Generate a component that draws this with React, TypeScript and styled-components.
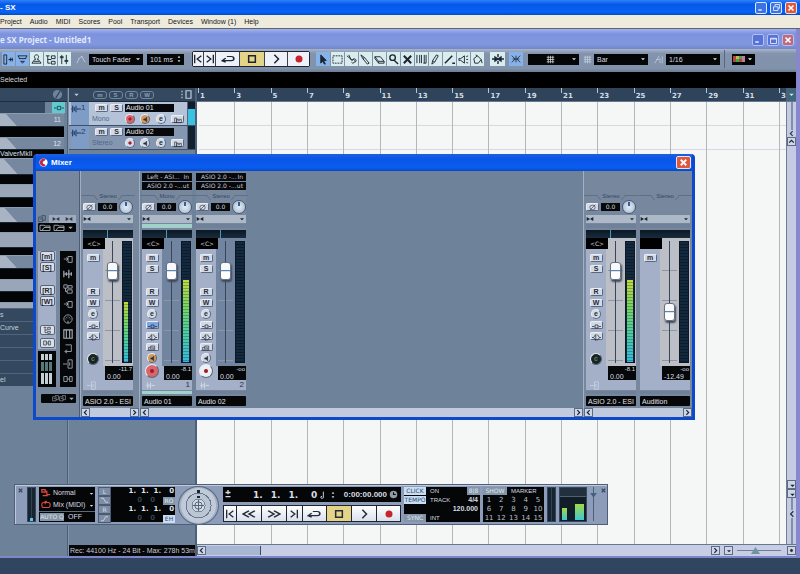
import React from "react";
import styled, { createGlobalStyle, css } from "styled-components";

const Global = createGlobalStyle`
  *, *::before, *::after { box-sizing: border-box; }
  body { margin: 0; font-family: "Liberation Sans", Arial, sans-serif; font-size: 7px; line-height: 8px; color: #111; background: #2f4560; overflow: hidden; }
  button, select, input { font: inherit; color: inherit; margin: 0; padding: 0; border: 0; border-radius: 0; }
  svg { display: block; flex: none; }
`;

/* ---------- glyphs ---------- */

const paths: Record<string, React.ReactNode> = {
  min: <path d="M2 9h5" strokeWidth="2" />,
  restore: <path d="M4 4V2h6v5H8M2 5h6v5H2z" />,
  max: <path d="M2 3h8v7H2zM2 4h8" />,
  x: <path d="M3 3l6 6M9 3l-6 6" strokeWidth="2" />,
  down: <path d="M3 5h6L6 8z" fill="currentColor" stroke="none" />,
  updown: <path d="M4 4h4L6 1zM4 8h4L6 11z" fill="currentColor" stroke="none" />,
  left: <path d="M8 2L4 6l4 4" strokeWidth="2" />,
  right: <path d="M4 2l4 4-4 4" strokeWidth="2" />,
  up: <path d="M2 8l4-4 4 4" strokeWidth="2" />,
  inspector: <path d="M1 1v10h3V1zM6 6h5M8 4v4M10 4v4" />,
  overview: <path d="M1 2h10M2 5h8M4 8h4l-2 2zM1 2l2 3M11 2L9 5" />,
  person: <path d="M6 1a2 2 0 0 1 2 3L7 6h1l3 4H1l3-4h1L4 4a2 2 0 0 1 2-3zM3 8h6" />,
  tree: <path d="M1 2h4M3 2v8h3M7 2h4v3H7zM7 8h4v3H7zM3 6h4" />,
  levels: <path d="M3 1v10M8 1v10M1 4h4M6 8h4M1 3h4M6 7h4" />,
  trackctl: <path d="M2 1v2M2 5v2M2 9v2M6 1h5v10H6z" strokeWidth="1.2" />,
  auto: <path d="M1 11l3-6 3-2 4 7M3 5l1 1M6 3l2 0" />,
  start: <path d="M2 1v10M10 2L5 6l5 4" strokeWidth="1.6" />,
  end: <path d="M10 1v10M2 2l5 4-5 4" strokeWidth="1.6" />,
  rew: <path d="M6 2L1 6l5 4M11 2L6 6l5 4" strokeWidth="1.6" />,
  fwd: <path d="M1 2l5 4-5 4M6 2l5 4-5 4" strokeWidth="1.6" />,
  loop: <path d="M5 3h4q2 0 2 2.5T9 8H1l3-3M1 8l3 2" strokeWidth="1.4" />,
  stop: <path d="M2 2h8v8H2z" strokeWidth="1.8" />,
  play: <path d="M4 1l5 5-5 5" strokeWidth="1.8" />,
  rec: <circle cx="6" cy="6" r="4.2" fill="#c8232b" stroke="none" />,
  arrow: <path d="M3 1l6 6H6l2 4-1 0-2-3-2 2z" fill="currentColor" />,
  range: <path d="M1 2h10v8H1z" strokeDasharray="2 1" />,
  scissors: <path d="M1 2l6 5M3 1l3 6M7 6a2 2 0 1 1-1 3M7 7a2 2 0 1 1 3 2" />,
  glue: <path d="M1 1l4 3 5 6-2 1-5-6zM5 4L3 5" />,
  eraser: <path d="M1 3h6l4 5H5zM1 3v2l4 5V8M5 10h6V8" />,
  zoom: <path d="M5 1a3 3 0 1 1 0 6 3 3 0 0 1 0-6zM7 7l4 4" strokeWidth="1.5" />,
  mute: <path d="M2 2l8 8M10 2l-8 8" strokeWidth="2.2" />,
  warp: <path d="M1 1v9M4 1v9M6 1v9M9 1v9M11 1v9M8 10h3" />,
  pencil: <path d="M2 11l1-4 4-6 2 1-4 7zM3 7l2 2" />,
  line: <path d="M1 10L9 2M9 10l3 0" strokeWidth="1.6" />,
  scrub: <path d="M1 5h2l4-3v8L3 7H1zM9 3l2-1M9 6h2M9 9l2 1" />,
  color: <path d="M2 5l4-3 4 4-3 4H3zM6 2L4 1M10 6l1 4" />,
  snapcross: <path d="M0 6h4M8 6h4M6 1v3M6 8v3M3 4l3 2-3 2zM9 4L6 6l3 2z" fill="currentColor" strokeWidth="1.4" />,
  snap: <path d="M6 2v8M1 2l4 4-4 4M11 2L7 6l4 4M2 6h8" />,
  grid: <path d="M1 3h10M1 6h10M1 9h10M3 1v10M6 1v10M9 1v10" />,
  quant: <path d="M1 11L7 1M3 6h4M8 11V4M11 11V2" />,
  bypass: <path d="M0 6h3M9 6h3M4 4h4v4H4z" />,
  inserts: <path d="M0 6h2M10 6h2M5 2L2 6l3 4zM7 2l3 4-3 4" />,
  sends: <path d="M1 9V5h3V3h6v6zM4 5v3M6 4v4M8 5v3" />,
  monitor: <path d="M3 5h2l3-3v8L5 7H3z" fill="currentColor" />,
  dot: <path d="M6 4a2 2 0 1 1 0 4 2 2 0 0 1 0-4z" fill="currentColor" />,
  lanes: <path d="M1 3h3v7H1zM4 5h7v5H4zM6 7h3" />,
  wave: <path d="M0 6h1M2 2v8M4 4v4M6 2v8M8 5v2M8 6h4" strokeWidth="1.4" />,
  phase: <path d="M6 2a4 3.5 0 1 1 0 8 4 3.5 0 0 1 0-8zM1 11L11 1" />,
  edit: <><circle cx="6" cy="6" r="5" fill="#6f849c" stroke="none" /><path d="M9 2L4 10" stroke="#34485f" strokeWidth="1.4" /></>,
  link: <path d="M1 3h4v6H1zM5 6h3M8 3h3v6H8z" />,
  ext: <path d="M0 6h5M6 1h5v10H6zM8 4v4" />,
  audio: <path d="M1 2v8M4 4v4M7 1v10M10 4v4M1 6h9" strokeWidth="1.4" />,
  group: <path d="M1 1h4v4H1zM6 2h5v3H6zM5 7h6v4H5zM3 5v4h2" />,
  route: <path d="M1 6h5M6 3h5v7H6zM4 4l2 2-2 2" />,
  midi: <path d="M6 1a5 5 0 1 1 0 10A5 5 0 0 1 6 1zM3 6h1M8 6h1M6 3v1M4 4l1 1M7 5l1-1M6 8v3" />,
  keys: <path d="M1 1h10v10H1zM4 1v10M8 1v10M4 1v6M8 1v6" strokeWidth="1.3" />,
  return: <path d="M3 1h7v8H3M5 7L2 9l3 2" />,
  folder: <path d="M1 3h4l1 1h5v6H1zM3 10l2-4h6" />,
  copy: <path d="M1 3h6v7H1zM5 1h6v7H7M3 6h3" />,
  cursor: <path d="M6 0v12M0 6h12M6 2a4 4 0 1 1 0 8 4 4 0 0 1 0-8z" />,
  plusminus: <path d="M6 0v5M3 3h6M3 8h6" strokeWidth="1.6" />,
  note: <path d="M8 1v8M8 9a2 1.5 0 1 1-2-1" strokeWidth="1.4" />,
  clock: <><circle cx="6" cy="6" r="5" fill="#8f9aa6" stroke="none" /><path d="M6 3v3h3" stroke="#040608" strokeWidth="1.4" /></>,
  recmode: <path d="M1 2h4v3H1zM5 4h2v4M7 8h4M2 9h6" strokeWidth="1.5" />,
  cyclemode: <path d="M3 3h6q2 0 2 3t-2 3H3q-2 0-2-3t2-3M5 1v4M7 1l-2 2" strokeWidth="1.3" />,
  punchin: <path d="M0 2h4l4 7h4" strokeWidth="1.4" />,
  punchout: <path d="M0 10h4l4-7h4" strokeWidth="1.4" />,
  marks: <path d="M1 3l5 3-5 3zM11 3L6 6l5 3z" fill="currentColor" stroke="none" />,
  disc: <><circle cx="6" cy="6" r="5.5" fill="#fff" stroke="none" /><path d="M9 2a5 5 0 1 0 0 8L7 8a2 2 0 1 1 0-4z" fill="#c22b4b" stroke="none" /></>,
};

const Glyph = ({ n, s = 10, w }: { n: string; s?: number; w?: number }) => (
  <svg width={w ?? s} height={s} viewBox="0 0 12 12" fill="none" stroke="currentColor" strokeWidth="1" preserveAspectRatio={w ? "none" : undefined} aria-hidden="true">
    {paths[n]}
  </svg>
);

/* ---------- shared parts ---------- */

const WinButton = styled.button<{ $close?: boolean; $soft?: boolean }>`
  width: 12px; height: 12px; display: grid; place-items: center; color: #fff;
  border: 1px solid ${p => (p.$soft ? "#b3bff0" : "#dbe6ff")}; border-radius: 2px;
  background: ${p => (p.$close ? (p.$soft ? "#c1697c" : "#e2573a") : p.$soft ? "#5673d8" : "#3a72e8")};
`;
const WinButtons = styled.div`display: flex; gap: 3px; margin-left: auto;`;

const DarkSelect = styled.label<{ $w: number }>`
  display: flex; align-items: center; width: ${p => p.$w}px; height: 11px; background: #050608; color: #d9dde2; padding: 0 1px 0 3px;
  select { appearance: none; background: transparent; flex: 1; min-width: 0; height: 11px; outline: 0; line-height: 11px; }
`;
const Drop = ({ w, label, value, icon, arrow = "down" }: { w: number; label: string; value: string; icon?: string; arrow?: string }) => (
  <DarkSelect $w={w}>
    {icon && <Spaced><Glyph n={icon} s={9} /></Spaced>}
    <select aria-label={label}><option>{value}</option></select>
    <Glyph n={arrow} s={8} />
  </DarkSelect>
);
const Spaced = styled.span`margin-left: 15px;`;

/* ---------- application frame ---------- */

const Page = styled.div`position: relative; min-height: 100vh; display: flex; flex-direction: column; background: #2f4560;`;
const AppTitle = styled.header`
  height: 15px; display: flex; align-items: center; padding-right: 3px; color: #fff; font-size: 8px; font-weight: bold;
  background: linear-gradient(#2f80f8, #0658e8 30%, #0763f6 80%, #0449c8);
`;
const MenuBar = styled.nav`
  height: 14px; display: flex; align-items: center; gap: 8px; background: #efebdc; border-bottom: 1px solid #5d6570;
  button { background: transparent; color: #15171a; white-space: nowrap; }
`;
const Project = styled.main`flex: 1; display: flex; flex-direction: column; border-right: 4px solid #8687cf; border-bottom: 2px solid #7f85c6; margin-bottom: 16px; min-height: 0;`;
const ProjectTitle = styled.div`
  height: 20px; display: flex; align-items: center; padding: 2px 2px 0 0; color: #e3e9fb; font: bold 8px/10px "Open Sans", "Noto Sans", sans-serif;
  background: linear-gradient(#a3b2ee, #7c92de 25%, #8197df 75%, #7386cb);
`;
const Toolbar = styled.div`
  height: 23px; display: flex; align-items: center; padding: 0 2px 3px; background: linear-gradient(#a9b5c8, #8393ad 20%, #8192ab 85%, #6b7c94);
  color: #1c2431;
`;
const Group = styled.div<{ $ml?: number; $dark?: boolean }>`
  display: flex; gap: 1px; margin-left: ${p => p.$ml ?? 0}px; flex: none;
  ${p => p.$dark && css`border: 1px solid #20242e; background: #3a4252; border-radius: 2px;`}
`;
const ToolButton = styled.button<{ $w?: number; $on?: boolean; $white?: boolean; $yellow?: boolean }>`
  width: ${p => p.$w ?? 13}px; height: 14px; display: grid; place-items: center;
  background: ${p => (p.$on ? "#86b2ea" : p.$yellow ? "#e3d487" : p.$white ? "#eef1f7" : "#d9ecee")};
`;
const Gap = styled.span<{ $w: number }>`width: ${p => p.$w}px; flex: none;`;
const Pale = styled.span`color: #c3cfdd;`;
const Divider = styled.span`width: 1px; height: 18px; background: #566780; flex: none;`;
const Swatches = styled.span`
  display: grid; grid-template-columns: repeat(4, 3px); grid-auto-rows: 3px;
  i { background: #b3493a; } i:nth-child(2n) { background: #c9b94a; } i:nth-child(3n) { background: #45a35a; } i:nth-child(4n) { background: #c07f9a; }
`;
const InfoLine = styled.div`height: 16px; background: #000; color: #d5d8dc; line-height: 15px;`;
const Body = styled.div`flex: 1; display: grid; grid-template-columns: 68px 129px minmax(0, 1fr); background: #6d8299; min-height: 0;`;

/* ---------- inspector ---------- */

const Inspector = styled.aside`border-right: 1px solid #4c6079; display: flex; flex-direction: column;`;
const InsHead = styled.div`
  height: 14px; background: #34485f; border-bottom: 1px solid #1e2c3c; display: flex; justify-content: flex-end; align-items: center; padding-right: 4px; color: #8fa3b9;
`;
const InsSlot = styled.div`height: 11px; display: flex; justify-content: space-between; padding-right: 2px; color: #0d4047;
  span { width: 45px; background: #34485f; }
  button { width: 13px; height: 11px; background: #62c9cf; display: grid; place-items: center; }
`;
const Band = styled.div<{ $h: number; $k: string }>`
  height: ${p => p.$h}px; margin-right: 3px; display: flex; align-items: center; padding-right: 3px; overflow: hidden;
  background: ${p => ({ black: "#020406", light: "#99a6b8", plain: "#76889f", curve: "linear-gradient(48deg, #a8b4c4 0 22%, #76889f 23%)" }[p.$k])};
  border-top: 1px solid ${p => (p.$k === "black" ? "#1a2634" : "#8b9bb0")};
  color: #dde2e8; justify-content: ${p => (p.$k === "curve" ? "flex-end" : "flex-start")};
`;
const InsTab = styled.button`
  height: 13px; margin-right: 3px; background: #34485f; color: #c6d0db; border-top: 1px solid #50647c; text-align: left;
`;

/* ---------- track list ---------- */

const TrackList = styled.section`display: flex; flex-direction: column; border-left: 1px solid #8295ac; border-right: 2px solid #4c6079; min-height: 0;`;
const ListHead = styled.div`
  height: 14px; flex: none; display: flex; align-items: center; gap: 2px; background: #34485f; border-bottom: 1px solid #1e2c3c; padding: 0 3px; color: #c0ccda;
`;
const Pill = styled.button`width: 14px; height: 8px; border: 1px solid #71879f; border-radius: 3px; background: #34485f; color: #8ba0b6; font-size: 6px; line-height: 6px; font-weight: bold;`;
const Track = styled.div<{ $sel?: boolean }>`
  height: 24px; flex: none; display: grid; grid-template-columns: 18px minmax(0, 1fr) 8px; border-bottom: 1px solid #3e5168; padding-left: 2px;
  background: ${p => (p.$sel ? "#b5c3d9" : "#8496b0")};
`;
const TrackTag = styled.div`background: #7f9cc6; color: #20406a; display: flex; align-items: flex-start; padding-top: 2px; font-size: 8px;`;
const TrackMain = styled.div`display: flex; flex-direction: column; padding: 1px 1px 0 3px; gap: 1px;`;
const Line = styled.div`display: flex; align-items: center; gap: 2px; height: 10px;`;
const MiniButton = styled.button<{ $round?: boolean; $bg?: string; $size?: number }>`
  width: ${p => p.$size ?? (p.$round ? 10 : 13)}px; height: ${p => p.$size ?? (p.$round ? 10 : 8)}px; flex: none;
  display: grid; place-items: center; border: 1px solid #e9edf4; border-right-color: #596880; border-bottom-color: #596880;
  border-radius: ${p => (p.$round ? "50%" : "2px")}; background: ${p => p.$bg ?? "#d3dae6"}; color: #262c3a; font-size: 7px; line-height: 6px; font-weight: bold;
`;
const TrackName = styled.input`width: 49px; height: 8px; background: #06080b; color: #e3e6ea; padding-left: 1px;`;
const TrackKind = styled.span`width: 31px; color: #4f688c;`;
const TrackMeter = styled.div<{ $on?: boolean }>`background: ${p => (p.$on ? "linear-gradient(#0d1c2c 30%, #39c3e3 30%)" : "#12202f")}; border-left: 1px solid #53677f;`;
const Status = styled.div`margin-top: auto; height: 11px; background: #05070a; color: #c7ccd2; line-height: 11px; white-space: nowrap; overflow: hidden; padding-left: 1px;`;

/* ---------- arrange ---------- */

const Arrange = styled.section`display: grid; grid-template-rows: 14px minmax(0, 1fr) 12px; min-width: 0;`;
const bars = css`display: grid; grid-template-columns: repeat(16, minmax(0, 36fr)) minmax(0, 7fr); flex: 1; min-width: 0;`;
const RulerRow = styled.div`display: flex; background: #2f445b; border-bottom: 1px solid #66788c; padding-left: 1px; color: #d4dde6;`;
const Ruler = styled.div`
  ${bars}
  span { border-left: 1px solid #b8c5d1; height: 5px; padding: 4px 0 0 1px; font: bold 7px/9px "DejaVu Sans", sans-serif; white-space: nowrap; }
`;
const Canvas = styled.div`display: flex; background: #f5f7f7; padding-left: 1px;`;
const Bars = styled.div`
  ${bars}
  background: linear-gradient(transparent 23px, #d5d9dc 23px 24px, transparent 24px 47px, #d9d5ea 47px 48px, transparent 48px);
  span { border-left: 1px solid #b2b7ba; } span:first-child { border-color: #f5f7f7; }
`;
const VScroll = styled.div`width: 10px; background: #c5cbe2; border-left: 1px solid #6f7f93; display: flex; flex-direction: column; align-items: center; color: #27364a;`;
const ScrollBtn = styled.button`width: 9px; height: 9px; flex: none; display: grid; place-items: center; background: #cdd5e6; border: 1px solid #5c6c84; color: #18222f;`;
const VTrack = styled.span<{ $h?: number }>`width: 2px; background: #8190a6; ${p => (p.$h ? `height:${p.$h}px;` : "flex: 1;")} ${p => !p.$h && "background: transparent;"}`;
const HScroll = styled.div`display: flex; align-items: center; height: 12px; background: #c6cde4; border-top: 1px solid #68788d;`;
const HThumb = styled.span`width: 55px; height: 9px; background: #a7b6d2; border-right: 1px solid #3c4c62;`;
const ZoomLine = styled.input`
  appearance: none; width: 44px; height: 9px; background: linear-gradient(transparent 4px, #6e7f96 4px 5px, transparent 5px);
  &::-webkit-slider-thumb { appearance: none; width: 9px; height: 7px; background: #6f96a0; clip-path: polygon(50% 0, 100% 100%, 0 100%); }
`;

/* ---------- mixer ---------- */

const Mixer = styled.section`
  position: absolute; left: 33px; right: 105px; top: 154px; border: 3px solid #0d49cc; border-top: 0; border-radius: 4px 4px 0 0; background: #6e839a;
`;
const MixTitle = styled.div`
  height: 17px; display: flex; align-items: center; gap: 3px; padding: 0 1px 0 3px; color: #fff; font-size: 8px; font-weight: bold; border-radius: 3px 3px 0 0;
  background: linear-gradient(#1d5fe0, #0a55e6 30%, #0a5df2 80%, #0848c4);
`;
const MixBody = styled.div`display: flex; align-items: stretch;`;
const Pane = styled.div<{ $w?: number; $grow?: boolean }>`
  ${p => (p.$grow ? "flex: 1; min-width: 0;" : `width: ${p.$w}px; flex: none;`)}
  display: flex; flex-direction: column; border-left: 1px solid #a1afc0; background: ${p => (p.$grow ? "#6e839a" : "#77879e")};
`;
const Strips = styled.div`display: flex; flex: 1; gap: 4px; padding: 1px 2px 0;`;
const PaneScroll = styled.div`display: flex; justify-content: space-between; height: 9px; margin-top: 2px; background: #c2cadd;`;

const Strip = styled.div`width: 50px; flex: none; display: flex; flex-direction: column; background: #77879e;`;
const Routing = styled.div`height: 18px; display: flex; flex-direction: column; gap: 1px; padding-top: 1px;`;
const Route = styled.button`
  height: 8px; background: #06080b; color: #c8cdd3; font: 6px/8px "DejaVu Sans", sans-serif; display: flex; justify-content: space-between; padding: 0 3px 0 5px; white-space: nowrap;
`;
const Kind = styled.div`
  height: 9px; margin-top: 1px; display: flex; align-items: flex-end; font-size: 6px; line-height: 8px; color: #34475f;
  &::before, &::after { content: ""; flex: 1; height: 5px; border-top: 1px solid #5e6f87; }
  &::before { border-right: 1px solid #5e6f87; transform: skewX(40deg); } &::after { border-left: 1px solid #5e6f87; transform: skewX(-40deg); }
  span { padding: 0 3px; }
`;
const GainRow = styled.div`height: 14px; display: flex; align-items: center; gap: 2px; color: #46535f;`;
const Gain = styled.output`width: 19px; height: 8px; background: #06080b; color: #d0d4d9; text-align: center; font: 6px/8px "DejaVu Sans", sans-serif;`;
const Knob = styled.button`
  width: 14px; height: 14px; margin-left: auto; border-radius: 50%; border: 1px solid #485a72; background: linear-gradient(90deg, transparent 5px, #345e9c 5px 7px, transparent 7px) 0 1px / 12px 4px no-repeat, radial-gradient(#e3ecf5, #a1b6ce);
`;
const Bar = styled.button`height: 8px; margin-top: 1px; background: #aeb9c8; display: flex; justify-content: space-between; color: #1a2431;`;
const Tint = styled.div<{ $on?: boolean; $h?: number }>`height: ${p => p.$h ?? 4}px; margin-top: 1px; background: ${p => (p.$on ? "#a1d1c8" : "#6f8199")};`;
const Pan = styled.div<{ $on: boolean }>`
  height: 8px; margin-top: 2px; background: ${p => (p.$on ? "linear-gradient(90deg, transparent 24px, #4f98b3 24px 25px, transparent 25px), " : "")}linear-gradient(#0c1824, #172c3e);
`;
const StripBody = styled.div`height: 142px; display: grid; grid-template-columns: 20px minmax(0, 1fr);`;
const Side = styled.div`background: #a4b0c7; display: flex; flex-direction: column; align-items: center; gap: 1px;`;
const PanText = styled.div`width: 22px; height: 11px; margin-bottom: 3px; flex: none; background: #000; color: #d5d9de; text-align: center; font: 6px/11px "DejaVu Sans", sans-serif; align-self: flex-start; z-index: 1;`;
const Slot = styled.div<{ $h?: number }>`height: ${p => p.$h ?? 10}px; display: grid; place-items: center; flex: none; color: #dbe3ec;`;
const FaderCol = styled.div`display: flex; flex-direction: column; background: #a4b0c7;`;
const FaderArea = styled.div<{ $pale?: boolean }>`
  height: 128px; display: flex; justify-content: space-between; padding: 3px 1px 2px 2px; background: ${p => (p.$pale ? "#bcbfc6" : "#7285a0")};
`;
const Fader = styled.input`
  appearance: none; writing-mode: vertical-lr; direction: rtl; width: 15px; height: 122px;
  background: linear-gradient(90deg, transparent 7px, #39465a 7px 8px, transparent 8px), repeating-linear-gradient(transparent 0 29px, #8d96a6 29px 30px);
  &::-webkit-slider-thumb {
    appearance: none; width: 11px; height: 18px; border: 1px solid #667284; border-radius: 3px; box-shadow: 1px 2px 2px #3d485a;
    background: linear-gradient(#f7f9fb 7px, #5d83ae 7px 8px, #d5e2f0 8px 9px, #fff 9px);
  }
`;
const Meter = styled.div<{ $narrow?: boolean }>`
  width: 10px; height: 122px; display: flex; align-items: flex-end; background: repeating-linear-gradient(#13293d 0 2px, #0d1c2c 2px 3px);
  justify-content: ${p => (p.$narrow ? "flex-start" : "center")}; overflow: hidden; border: 1px solid #0c1826;
`;
const Level = styled.div<{ $narrow?: boolean }>`
  width: ${p => (p.$narrow ? 4 : 6)}px; margin-left: ${p => (p.$narrow ? 1 : 0)}px;
  background: repeating-linear-gradient(transparent 0 2px, #0b24304d 2px 3px), linear-gradient(#c3da3c, #7fd65a 30%, #4ccfa0 65%, #38b9dc);
`;
const ValueBox = styled.div`
  height: 14px; background: #050709; color: #d9dde2; font-size: 7px; line-height: 7px; display: flex; flex-direction: column; padding: 0 1px;
  margin-left: 2px;
  small { font-size: 6px; text-align: right; }
  span { padding-left: 1px; white-space: nowrap; }
`;
const StripNo = styled.div`height: 10px; display: flex; justify-content: space-between; align-items: center; background: #a4b0c7; font-size: 8px; color: #26324a; padding: 0 2px 0 4px;`;
const Wave = styled.span`color: #cbd6e5;`;
const StripName = styled.input`width: 100%; height: 10px; margin-top: 2px; background: #050709; color: #e1e5ea; padding-left: 2px; border-radius: 1px;`;

type StripProps = {
  name: string; kind: string; routes?: string[]; tint?: boolean; io?: boolean; master?: boolean;
  fader: number; peak: string; value: string; level?: number; narrow?: boolean; no?: string; armed?: boolean;
};

const Red = styled.span`color: #a51f2b;`;
const Dim = styled.span`color: #5d7c70;`;

const ChannelStrip = (s: StripProps) => (
  <Strip>
    <Routing>{s.routes?.map((r, i) => <Route key={i}><span>{r}</span><span>{i ? "ut" : "In"}</span></Route>)}</Routing>
    <Kind><span>{s.kind}</span></Kind>
    <GainRow>
      {!s.master && <>
        <MiniButton aria-label="Phase"><Glyph n="phase" s={7} /></MiniButton>
        <Gain>0.0</Gain>
        <Knob aria-label="Input gain" />
      </>}
    </GainRow>
    <Bar aria-label="View"><Glyph n="marks" s={8} /><Glyph n="down" s={8} /></Bar>
    <Tint $on={s.tint} />
    <Pan $on={!s.master} />
    <StripBody>
      <Side>
        <PanText>{s.master ? "" : "<C>"}</PanText>
        <Slot><MiniButton aria-label="Mute">m</MiniButton></Slot>
        {!s.master && <>
          <Slot>{s.narrow ? null : <MiniButton aria-label="Solo">S</MiniButton>}</Slot>
          <Slot $h={11} />
          <Slot><MiniButton aria-label="Read">R</MiniButton></Slot>
          <Slot><MiniButton aria-label="Write">W</MiniButton></Slot>
          <Slot><MiniButton $round aria-label="Edit">e</MiniButton></Slot>
          <Slot><MiniButton $bg={s.tint ? "#7aa5e6" : undefined} aria-label="EQ bypass"><Glyph n="bypass" s={9} /></MiniButton></Slot>
          <Slot><MiniButton aria-label="Insert bypass"><Glyph n="inserts" s={9} /></MiniButton></Slot>
          {!s.io && <>
            <Slot><MiniButton aria-label="Send bypass"><Glyph n="sends" s={8} /></MiniButton></Slot>
            <Slot><MiniButton $round $bg={s.armed ? "#d39a5c" : undefined} aria-label="Monitor"><Glyph n="monitor" s={7} /></MiniButton></Slot>
            <Slot $h={13}><MiniButton $round $size={14} $bg={s.armed ? "#d9666b" : "#eceff4"} aria-label="Record enable"><Red><Glyph n="dot" s={10} /></Red></MiniButton></Slot>
          </>}
          {s.io && <>
            <Slot $h={9} />
            <Slot $h={13}><MiniButton $round $size={12} $bg="#182420" aria-label="Clip"><Dim>c</Dim></MiniButton></Slot>
          </>}
        </>}
      </Side>
      <FaderCol>
        <FaderArea $pale={s.io}>
          <Fader type="range" min={0} max={100} defaultValue={s.fader} aria-label={`${s.name} level`} />
          <Meter $narrow={s.narrow}>{s.level ? <Level $narrow={s.narrow} style={{ height: `${s.level}%` }} /> : null}</Meter>
        </FaderArea>
        <ValueBox><small>{s.peak}</small><span>{s.value}</span></ValueBox>
      </FaderCol>
    </StripBody>
    <StripNo><Wave>{!s.master && <Glyph n={s.io ? "ext" : "wave"} s={9} />}</Wave><span>{s.no}</span></StripNo>
    <Tint $on={s.tint} $h={3} />
    <StripName defaultValue={s.name} aria-label="Channel name" />
  </Strip>
);

const Common = styled.div`width: 44px; flex: none; display: flex; flex-direction: column; padding: 34px 3px 0 2px; background: #77879e; border-right: 1px solid #4a5b73; color: #1b2430;`;
const CommonTop = styled.div`height: 18px; display: flex; align-items: flex-end; gap: 3px; color: #2c394c;
  span { flex: 1; height: 8px; background: #9fabbd; display: flex; justify-content: space-around; }
`;
const BlackRow = styled.div<{ $ml?: number }>`height: 9px; margin-left: ${p => p.$ml ?? 0}px; background: #050709; color: #aab2bb; display: flex; align-items: center; justify-content: space-evenly; border-radius: 1px;`;
const CommonGrid = styled.div`height: 136px; margin: 19px 0 7px; display: grid; grid-template-columns: 18px 16px; justify-content: space-between;`;
const CommonBtns = styled.div`display: flex; flex-direction: column; align-items: center; gap: 1px; background: linear-gradient(#a4b0c7 0 98px, #77879e 98px);`;
const CommonBtn = styled.button`width: 15px; height: 10px; flex: none; background: #d9dfe8; border: 1px solid #56657b; border-radius: 2px; display: grid; place-items: center; font-size: 7px; line-height: 7px; font-weight: bold;`;
const NarrowGrid = styled.button`
  width: 18px; flex: 1; margin-top: 2px; border: 3px solid #030506;
  background: repeating-linear-gradient(90deg, transparent 0 3px, #030506 3px 4px), linear-gradient(#c4cfd3 6px, #030506 6px 8px, #58797b 8px 17px, #030506 17px 19px, #c4cfd3 19px);
`;
const TypeColumn = styled.div`background: #050709; color: #a9b1bb; display: flex; flex-direction: column; align-items: center; justify-content: space-between; padding: 3px 0;`;

/* ---------- transport ---------- */

const Transport = styled.section`
  position: absolute; left: 14px; bottom: 49px; height: 41px; display: flex; align-items: stretch; gap: 3px; padding: 2px 0 2px 2px; border: 1px solid #4f5f78;
  background: #8d9cb8; color: #d9dde2; box-shadow: inset 1px 1px #bfc9da;
`;
const Edge = styled.button`width: 7px; background: transparent; color: #39475c; display: flex; flex: none;`;
const DarkCell = styled.div<{ $w: number }>`width: ${p => p.$w}px; flex: none; background: #040608; display: flex; flex-direction: column;`;
const Tiny = styled.div`
  width: 9px; flex: none; border: 1px solid #34475d; background: repeating-linear-gradient(90deg, #16242f 0 3px, #334152 3px 4px); display: flex; align-items: flex-end; justify-content: center;
  i { width: 3px; height: 3px; background: #59c8e8; }
`;
const ModeRow = styled.label`
  height: 12px; display: flex; align-items: center; gap: 2px; padding-left: 2px; color: #e04a3c;
  select { appearance: none; background: transparent; color: #d9dde2; flex: 1; min-width: 0; height: 12px; outline: 0; }
  svg:last-child { color: #d9dde2; }
`;
const Tag = styled.button<{ $dim?: boolean; $w?: number }>`
  width: ${p => p.$w ?? 22}px; height: 8px; background: ${p => (p.$dim ? "#8595a8" : "#c9ddf3")}; color: ${p => (p.$dim ? "#dfe7ef" : "#2d4c72")}; font: 6px/8px "DejaVu Sans", sans-serif; flex: none;
  display: grid; place-items: center;
`;
const Cells = styled.div`display: flex; align-items: center; gap: 4px; height: 9px; white-space: nowrap; font-size: 6px;`;
const Locators = styled.div`width: 77px; display: grid; grid-template-columns: 13px minmax(0, 1fr); grid-auto-rows: 9px; background: #040608; flex: none;`;
const LocBtn = styled.button`background: #7d8da5; border: 1px solid #4c5b72; color: #d6e0ea; height: 9px; font: 6px/7px "DejaVu Sans", sans-serif; display: grid; place-items: center;`;
const LocVal = styled.div<{ $dim?: boolean }>`
  display: flex; justify-content: flex-end; align-items: center; gap: ${p => (p.$dim ? 8 : 5)}px; font: bold 7px/9px "DejaVu Sans", sans-serif; color: ${p => (p.$dim ? "#35404a" : "#dfe3e8")};
  span:last-child { padding: 0 1px 0 3px; }
`;
const Wheel = styled.div`
  width: 41px; height: 39px; flex: none; border-radius: 50%; display: grid; place-items: center; color: #4b5d75; border: 1px solid #5b6a80; margin-top: -1px;
  background: linear-gradient(#1b2430, #1b2430) 18px 3px / 3px 3px no-repeat, linear-gradient(#1b2430, #1b2430) 18px 9px / 3px 2px no-repeat,
    radial-gradient(circle, #d3dae2 0 6px, #78879b 6px 7px, #bcc6d2 7px 12px, #697a90 12px 13px, #c0cad8 13px 17px, #a1afc2 18px);
`;
const Center = styled.div`width: 179px; flex: none; display: flex; flex-direction: column; gap: 3px; padding-left: 1px;`;
const Display = styled.div`
  height: 15px; background: #040608; display: flex; align-items: center; padding: 0 3px 0 0;
  em { font: bold 8px/10px "Liberation Sans", sans-serif; margin-right: 2px; }
`;
const Position = styled.strong`display: flex; gap: 8px; margin: 0 1px 0 20px; font: bold 9px/12px "DejaVu Sans", sans-serif; span:last-child { margin-left: 5px; }`;
const Keys = styled.div`flex: 1; display: grid; grid-template-columns: 12fr 24fr 24fr 15fr 24fr 24fr 24fr 23fr; gap: 1px; background: #20242e; border: 1px solid #20242e; color: #262c3a;`;
const Key = styled.button<{ $on?: boolean }>`display: grid; place-items: center; background: ${p => (p.$on ? "#e3d487" : "linear-gradient(#fff, #d9e1ec)")};`;
const Between = styled.div`display: flex; justify-content: flex-end; align-items: center; height: 9px;`;
const Markers = styled.div`
  display: grid; grid-template-columns: repeat(5, 1fr); grid-auto-rows: 9px; margin-top: 1px;
  button { background: transparent; color: #b9c0c8; font: 7px/9px "DejaVu Sans", sans-serif; }
`;
const OutMeter = styled.div`width: 28px; flex: none; border: 1px solid #34475d; background: linear-gradient(#22303d 8px, #50606f 8px 9px, #111d29 9px); display: flex; align-items: flex-end; justify-content: space-between; padding: 0 2px 1px;`;
const OutLevel = styled.i<{ $w: number }>`width: ${p => p.$w}px; background: linear-gradient(#a5d944, #3ec8d2);`;
const OutFader = styled.input`
  appearance: none; writing-mode: vertical-lr; direction: rtl; width: 7px; height: 34px; flex: none; background: linear-gradient(90deg, transparent 3px, #4d5e77 3px 4px, transparent 4px);
  &::-webkit-slider-thumb { appearance: none; width: 7px; height: 5px; background: #46607f; clip-path: polygon(0 0, 100% 0, 50% 100%); }
`;
const ColorButton = styled.button`width: 23px; height: 11px; background: #050608; color: #fff; display: flex; align-items: center; justify-content: center; gap: 1px;`;
const RulerEnd = styled.button`width: 10px; height: 13px; background: #3f667c; color: #d4e6ee; display: grid; place-items: center;`;
const Fill = styled.span`flex: 1;`;
const Bold = styled.strong`font-size: 7px; padding-right: 2px;`;
const MixClose = styled(WinButton)`width: 15px; height: 13px;`;
const ModeFoot = styled.div`display: flex; align-items: center; gap: 4px; height: 12px; padding-left: 1px; border-top: 1px solid #5c6a7c;`;

const tools = ["range", "scissors", "glue", "eraser", "zoom", "mute", "warp", "pencil", "line", "scrub", "color"];
const menus = ["Project", "Audio", "MIDI", "Scores", "Pool", "Transport", "Devices", "Window (1)", "Help"];
const bands: [number, string, string?][] = [
  [13, "curve", "11"], [11, "black"], [12, "curve", "12"], [9, "black", "ValverMkII"], [16, "curve"], [10, "black"], [13, "light"], [10, "black"],
  [15, "curve"], [10, "black"], [15, "light"], [8, "black"], [13, "curve"], [11, "black"], [12, "light"], [11, "black"], [6, "light"],
];
const keys = ["start", "rew", "fwd", "end", "loop", "stop", "play", "rec"];

export default function App() {
  return (
    <Page>
      <Global />
      <AppTitle>
        <span>- SX</span>
        <WinButtons>
          <WinButton aria-label="Minimize"><Glyph n="min" s={8} /></WinButton>
          <WinButton aria-label="Restore"><Glyph n="restore" s={9} /></WinButton>
          <WinButton $close aria-label="Close"><Glyph n="x" s={10} /></WinButton>
        </WinButtons>
      </AppTitle>
      <MenuBar>{menus.map(m => <button key={m}>{m}</button>)}</MenuBar>
      <Project>
        <ProjectTitle>
          <span>e SX Project - Untitled1</span>
          <WinButtons>
            <WinButton $soft aria-label="Minimize"><Glyph n="min" s={8} /></WinButton>
            <WinButton $soft aria-label="Maximize"><Glyph n="max" s={9} /></WinButton>
            <WinButton $soft $close aria-label="Close"><Glyph n="x" s={10} /></WinButton>
          </WinButtons>
        </ProjectTitle>
        <Toolbar>
          <Group>
            {["inspector", "overview", "person", "tree", "levels"].map((g, i) => <ToolButton key={g} $on={i < 2} aria-label={g}><Glyph n={g} s={11} /></ToolButton>)}
          </Group>
          <Gap $w={5} /><Pale><Glyph n="auto" s={10} /></Pale><Gap $w={3} />
          <Drop w={54} label="Automation mode" value="Touch Fader" />
          <Gap $w={4} />
          <Drop w={37} label="Return time" value="101 ms" arrow="updown" />
          <Group $ml={8} $dark>
            {[["start", 10], ["end", 11], ["loop", 23], ["stop", 24], ["play", 22], ["rec", 21]].map(([g, w]) => (
              <ToolButton key={g} $w={w as number} $white $yellow={g === "stop"} aria-label={g as string}><Glyph n={g as string} s={10} w={g === "loop" ? 14 : undefined} /></ToolButton>
            ))}
          </Group>
          <Gap $w={6} />
          <Group>
            <ToolButton $w={14} $on aria-label="Select"><Glyph n="arrow" s={11} /></ToolButton>
            {tools.map(g => <ToolButton key={g} aria-label={g}><Glyph n={g} s={11} /></ToolButton>)}
          </Group>
          <Gap $w={6} />
          <ToolButton $w={15} aria-label="Autoscroll"><Glyph n="snapcross" s={12} /></ToolButton>
          <Gap $w={4} />
          <ToolButton $w={14} $on aria-label="Snap"><Glyph n="snap" s={10} /></ToolButton>
          <Gap $w={5} />
          <Drop w={51} label="Snap mode" value="" icon="grid" />
          <Gap $w={4} /><Pale><Glyph n="grid" s={9} /></Pale><Gap $w={2} />
          <Drop w={54} label="Grid type" value="Bar" />
          <Gap $w={6} /><Pale><Glyph n="quant" s={9} /></Pale><Gap $w={3} />
          <Drop w={54} label="Quantize" value="1/16" />
          <Gap $w={4} /><Divider /><Gap $w={7} />
          <ColorButton aria-label="Color menu"><Swatches>{Array.from({ length: 8 }, (_, i) => <i key={i} />)}</Swatches><Glyph n="down" s={8} /></ColorButton>
        </Toolbar>
        <InfoLine>Selected</InfoLine>
        <Body>
          <Inspector>
            <InsHead><Glyph n="edit" s={11} /></InsHead>
            <InsSlot><span /><button aria-label="Bypass"><Glyph n="bypass" s={10} /></button></InsSlot>
            {bands.map(([h, k, t], i) => <Band key={i} $h={h} $k={k}>{t}</Band>)}
            <InsTab>s</InsTab><InsTab>Curve</InsTab><InsTab aria-label="Inserts" /><InsTab aria-label="Sends" /><InsTab aria-label="Channel" /><InsTab>el</InsTab>
          </Inspector>
          <TrackList>
            <ListHead>
              <Glyph n="down" s={9} /><Gap $w={8} />
              {["m", "S", "R", "W"].map(t => <Pill key={t}>{t}</Pill>)}
              <Gap $w={22} /><Glyph n="trackctl" s={9} w={12} />
            </ListHead>
            {["1", "2"].map(n => {
              const one = n === "1";
              return (
                <Track key={n} $sel={one}>
                  <TrackTag><Glyph n="wave" s={10} /><span>{n}</span></TrackTag>
                  <TrackMain>
                    <Line>
                      <Gap $w={1} />
                      <MiniButton aria-label="Mute">m</MiniButton><MiniButton aria-label="Solo">S</MiniButton>
                      <TrackName defaultValue={`Audio 0${n}`} aria-label="Track name" />
                    </Line>
                    <Line>
                      <TrackKind>{one ? "Mono" : "Stereo"}</TrackKind>
                      <MiniButton $round $bg={one ? "#d9666b" : undefined} aria-label="Record"><Red><Glyph n="dot" s={8} /></Red></MiniButton>
                      <Gap $w={1} />
                      <MiniButton $round $bg={one ? "#d39a5c" : undefined} aria-label="Monitor"><Glyph n="monitor" s={7} /></MiniButton>
                      <Gap $w={2} />
                      <MiniButton $round aria-label="Edit">e</MiniButton>
                      <Gap $w={1} />
                      <MiniButton aria-label="Lanes"><Glyph n="lanes" s={8} /></MiniButton>
                    </Line>
                  </TrackMain>
                  <TrackMeter $on={one} />
                </Track>
              );
            })}
            <Status>Rec: 44100 Hz - 24 Bit - Max: 278h 53m</Status>
          </TrackList>
          <Arrange>
            <RulerRow>
              <Ruler>{Array.from({ length: 17 }, (_, i) => <span key={i}>{i * 2 + 1}</span>)}</Ruler>
              <RulerEnd aria-label="Ruler format"><Glyph n="down" s={9} /></RulerEnd>
            </RulerRow>
            <Canvas>
              <Bars>{Array.from({ length: 17 }, (_, i) => <span key={i} />)}</Bars>
              <VScroll>
                <VTrack $h={28} /><Glyph n="left" s={7} />
                <ScrollBtn aria-label="Scroll up"><Glyph n="up" s={7} /></ScrollBtn>
                <VTrack />
                <ScrollBtn aria-label="Scroll down"><Glyph n="down" s={9} /></ScrollBtn>
                <ScrollBtn aria-label="Zoom presets"><Glyph n="down" s={9} /></ScrollBtn>
                <VTrack $h={12} /><Glyph n="left" s={8} /><VTrack $h={26} />
              </VScroll>
            </Canvas>
            <HScroll>
              <ScrollBtn aria-label="Scroll left"><Glyph n="left" s={7} /></ScrollBtn>
              <HThumb /><Fill />
              <ScrollBtn aria-label="Scroll right"><Glyph n="right" s={7} /></ScrollBtn>
              <Gap $w={4} />
              <ScrollBtn aria-label="Zoom presets"><Glyph n="down" s={8} /></ScrollBtn>
              <Gap $w={4} />
              <ZoomLine type="range" defaultValue={40} aria-label="Horizontal zoom" />
              <Gap $w={6} />
              <ScrollBtn aria-label="Resize"><Glyph n="dot" s={7} /></ScrollBtn>
            </HScroll>
          </Arrange>
        </Body>
      </Project>

      <Mixer aria-label="Mixer">
        <MixTitle><Glyph n="disc" s={9} /><span>Mixer</span><WinButtons><MixClose $close aria-label="Close"><Glyph n="x" s={11} /></MixClose></WinButtons></MixTitle>
        <MixBody>
          <Common>
            <CommonTop><Glyph n="copy" s={8} /><span><Glyph n="marks" s={8} /><Glyph n="marks" s={8} /></span></CommonTop>
            <BlackRow><Glyph n="folder" s={9} w={12} /><Glyph n="folder" s={9} w={12} /><Glyph n="down" s={9} /></BlackRow>
            <CommonGrid>
              <CommonBtns>
                <CommonBtn>[m]</CommonBtn><CommonBtn>[S]</CommonBtn><Slot $h={11} /><CommonBtn>[R]</CommonBtn><CommonBtn>[W]</CommonBtn><Slot $h={17} />
                <CommonBtn aria-label="Link"><Glyph n="tree" s={8} /></CommonBtn><Slot $h={1} /><CommonBtn aria-label="Reset"><Glyph n="link" s={8} /></CommonBtn>
                <NarrowGrid aria-label="Channel view" />
              </CommonBtns>
              <TypeColumn>{["route", "audio", "group", "route", "midi", "keys", "return", "ext", "link"].map((g, i) => <Glyph key={i} n={g} s={10} />)}</TypeColumn>
            </CommonGrid>
            <BlackRow $ml={3}><Gap $w={10} /><Glyph n="copy" s={7} /><Glyph n="copy" s={7} /><Glyph n="down" s={9} /></BlackRow>
          </Common>
          <Pane $w={59}>
            <Strips><ChannelStrip name="ASIO 2.0 - ESI" kind="Stereo" io narrow fader={80} peak="-11.7" value="0.00" level={50} /></Strips>
            <PaneScroll><ScrollBtn aria-label="Left"><Glyph n="left" s={7} /></ScrollBtn><ScrollBtn aria-label="Right"><Glyph n="right" s={7} /></ScrollBtn></PaneScroll>
          </Pane>
          <Pane $grow>
            <Strips>
              <ChannelStrip name="Audio 01" kind="Mono" routes={["Left - ASI...", "ASIO 2.0 -..."]} tint armed fader={80} peak="-8.1" value="0.00" level={68} no="1" />
              <ChannelStrip name="Audio 02" kind="Stereo" routes={["ASIO 2.0 -...", "ASIO 2.0 -..."]} fader={80} peak="-oo" value="0.00" no="2" />
            </Strips>
            <PaneScroll><ScrollBtn aria-label="Left"><Glyph n="left" s={7} /></ScrollBtn><ScrollBtn aria-label="Right"><Glyph n="right" s={7} /></ScrollBtn></PaneScroll>
          </Pane>
          <Pane $w={109}>
            <Strips>
              <ChannelStrip name="ASIO 2.0 - ESI" kind="Stereo" io fader={80} peak="-8.1" value="0.00" level={68} />
              <ChannelStrip name="Audition" kind="Stereo" io master fader={40} peak="-oo" value="-12.49" />
            </Strips>
            <PaneScroll><ScrollBtn aria-label="Left"><Glyph n="left" s={7} /></ScrollBtn><ScrollBtn aria-label="Right"><Glyph n="right" s={7} /></ScrollBtn></PaneScroll>
          </Pane>
        </MixBody>
      </Mixer>

      <Transport aria-label="Transport panel">
        <Edge aria-label="Close"><Glyph n="x" s={7} /></Edge>
        <Tiny><i /></Tiny>
        <DarkCell $w={56}>
          <ModeRow><Glyph n="recmode" s={10} /><select aria-label="Record mode"><option>Normal</option></select><Glyph n="down" s={7} /></ModeRow>
          <ModeRow><Glyph n="cyclemode" s={10} /><select aria-label="Cycle mode"><option>Mix (MIDI)</option></select><Glyph n="down" s={7} /></ModeRow>
          <ModeFoot><Tag $dim $w={24}>AUTO Q</Tag><span>OFF</span></ModeFoot>
        </DarkCell>
        <Locators>
          <LocBtn>L</LocBtn><LocVal><span>1.</span><span>1.</span><span>1.</span><span>0</span></LocVal>
          <LocBtn aria-label="Punch in"><Glyph n="punchin" s={7} /></LocBtn><LocVal $dim><span>0</span><span>0</span><Tag $dim $w={12}>RO</Tag></LocVal>
          <LocBtn>R</LocBtn><LocVal><span>1.</span><span>1.</span><span>1.</span><span>0</span></LocVal>
          <LocBtn aria-label="Punch out"><Glyph n="punchout" s={7} /></LocBtn><LocVal $dim><span>0</span><span>0</span><Tag $w={12}>EH</Tag></LocVal>
        </Locators>
        <Wheel><Glyph n="cursor" s={11} /></Wheel>
        <Center>
          <Display>
            <Glyph n="plusminus" s={10} />
            <Position><span>1.</span><span>1.</span><span>1.</span><span>0</span></Position>
            <Glyph n="note" s={8} /><Gap $w={3} /><Glyph n="updown" s={8} /><Fill /><em>0:00:00.000</em><Glyph n="clock" s={9} />
          </Display>
          <Keys>{keys.map(g => <Key key={g} $on={g === "stop"} aria-label={g}><Glyph n={g} s={10} w={["rew", "fwd", "loop"].includes(g) ? 14 : undefined} /></Key>)}</Keys>
        </Center>
        <DarkCell $w={76}>
          <Cells><Tag>CLICK</Tag><span>ON</span><Fill /><Tag $dim $w={13}>8|8</Tag></Cells>
          <Cells><Tag>TEMPO</Tag><span>TRACK</span><Fill /><Bold>4/4</Bold></Cells>
          <Between><Bold>120.000</Bold></Between>
          <Cells><Tag $dim>SYNC</Tag><span>INT</span></Cells>
        </DarkCell>
        <DarkCell $w={61}>
          <Cells><Tag $dim $w={24}>SHOW</Tag><span>MARKER</span></Cells>
          <Markers>{Array.from({ length: 15 }, (_, i) => <button key={i}>{i + 1}</button>)}</Markers>
        </DarkCell>
        <Tiny />
        <OutMeter><OutLevel $w={5} style={{ height: 12 }} /><OutLevel $w={9} style={{ height: 16 }} /></OutMeter>
        <OutFader type="range" defaultValue={80} aria-label="Output level" />
        <Edge aria-label="Collapse"><Glyph n="x" s={7} /></Edge>
      </Transport>
    </Page>
  );
}
